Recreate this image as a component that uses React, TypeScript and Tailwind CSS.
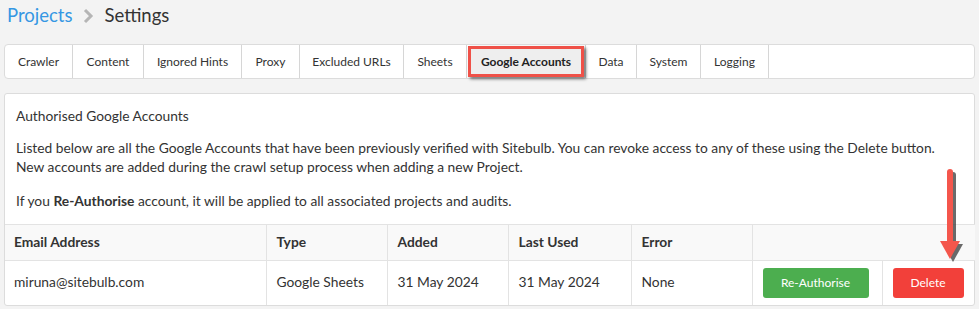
import React from "react";

const tabs = [
  { label: "Crawler", w: "w-[68px]" },
  { label: "Content", w: "w-[71px]" },
  { label: "Ignored Hints", w: "w-[98px]" },
  { label: "Proxy", w: "w-[58px]" },
  { label: "Excluded URLs", w: "w-[104px]" },
  { label: "Sheets", w: "w-[63px]" },
  { label: "Google Accounts", w: "w-[119px]", active: true },
  { label: "Data", w: "w-[51px]" },
  { label: "System", w: "w-[64px]" },
  { label: "Logging", w: "w-[68px]" },
];

function ChevronRight() {
  return (
    <svg width="12" height="16" viewBox="0 0 12 16" className="mx-[10px] mt-[2px]">
      <path d="M3 2 L9 8 L3 14" fill="none" stroke="#b5b5b5" strokeWidth="3" />
    </svg>
  );
}

function Arrow() {
  return (
    <svg
      className="absolute left-[936px] top-[166px] pointer-events-none"
      width="30"
      height="102"
      viewBox="0 0 30 102"
    >
      {/* shadow */}
      <g fill="#3a3a3a" opacity="0.75">
        <rect x="14" y="6" width="6" height="76" rx="3" />
        <path d="M7 78 L27 78 L17 96 Z" />
      </g>
      <g fill="#f4564c">
        <rect x="11" y="3" width="6" height="76" rx="3" />
        <path d="M4 75 L24 75 L14 93 Z" />
      </g>
    </svg>
  );
}

export default function App() {
  return (
    <div
      className="relative w-[979px] h-[309px] bg-[#f3f3f3] text-[#333] overflow-hidden"
      style={{ fontFamily: "Lato, 'Open Sans', sans-serif" }}
    >
      {/* breadcrumb */}
      <div className="flex items-center h-[30px] pl-[7px] text-[18.5px] leading-[30px]">
        <span className="text-[#3597e3]">Projects</span>
        <ChevronRight />
        <span className="text-[#333]">Settings</span>
      </div>

      {/* tabs */}
      <div className="mx-[4px] mt-[14px] h-[35px] flex bg-white border border-[#dcdcdc] rounded-[4px] text-[12px]">
        {tabs.map((t) =>
          t.active ? (
            <div key={t.label} className={`${t.w} h-full flex items-center justify-center border-r border-[#d6d6d6] px-[1px]`}>
              <div className="w-full h-[31px] flex items-center justify-center bg-[#eeeeee] border-[3px] border-[#ef5148] shadow-[2px_2px_3px_rgba(0,0,0,0.55)] font-bold text-[#222]">
                {t.label}
              </div>
            </div>
          ) : (
            <div key={t.label} className={`${t.w} h-full flex items-center justify-center border-r border-[#d6d6d6]`}>
              {t.label}
            </div>
          )
        )}
      </div>

      {/* panel */}
      <div className="mx-[4px] mt-[14px] bg-white border border-[#dcdcdc] rounded-[3px] text-[13.8px]">
        <div className="pl-[11px] pr-[10px] pt-[12px] pb-[14px]">
          <div className="leading-[20px]">Authorised Google Accounts</div>
          <p className="mt-[12px] leading-[19px]">
            Listed below are all the Google Accounts that have been previously verified with Sitebulb. You can revoke access to any of these using the Delete button.
            <br />
            New accounts are added during the crawl setup process when adding a new Project.
          </p>
          <p className="mt-[15px] leading-[19px]">
            If you <b>Re-Authorise</b> account, it will be applied to all associated projects and audits.
          </p>
        </div>
        <table className="w-full table-fixed border-collapse">
          <colgroup>
            <col className="w-[261px]" />
            <col className="w-[121px]" />
            <col className="w-[121px]" />
            <col className="w-[123px]" />
            <col className="w-[121px]" />
            <col className="w-[130px]" />
            <col className="w-[93px]" />
          </colgroup>
          <thead>
            <tr className="h-[36px] bg-[#f9f9f9] border-t border-b border-[#e3e3e3] text-left font-bold">
              <th className="pl-[9px] font-bold">Email Address</th>
              <th className="pl-[10px] border-l border-[#e3e3e3] font-bold">Type</th>
              <th className="pl-[10px] border-l border-[#e3e3e3] font-bold">Added</th>
              <th className="pl-[10px] border-l border-[#e3e3e3] font-bold">Last Used</th>
              <th className="pl-[10px] border-l border-[#e3e3e3] font-bold">Error</th>
              <th colSpan={2} className="border-l border-[#e3e3e3]"></th>
            </tr>
          </thead>
          <tbody>
            <tr className="h-[44px]">
              <td className="pl-[9px]">miruna@sitebulb.com</td>
              <td className="pl-[10px] border-l border-[#e3e3e3]">Google Sheets</td>
              <td className="pl-[10px] border-l border-[#e3e3e3]">31 May 2024</td>
              <td className="pl-[10px] border-l border-[#e3e3e3]">31 May 2024</td>
              <td className="pl-[10px] border-l border-[#e3e3e3]">None</td>
              <td className="border-l border-[#e3e3e3] pl-[10px]">
                <button className="w-[106px] h-[30px] rounded-[3px] bg-[#4cae4f] text-white text-[12px]">
                  Re-Authorise
                </button>
              </td>
              <td className="border-l border-[#e3e3e3] pl-[10px]">
                <button className="w-[71px] h-[30px] rounded-[3px] bg-[#f2403a] text-white text-[12px]">
                  Delete
                </button>
              </td>
            </tr>
          </tbody>
        </table>
      </div>

      <Arrow />
    </div>
  );
}
